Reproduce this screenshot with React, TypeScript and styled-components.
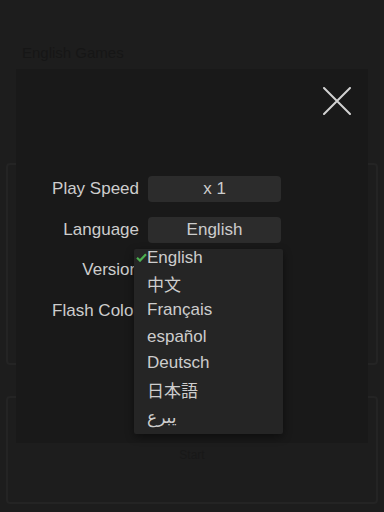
import React from 'react';
import styled, { createGlobalStyle } from 'styled-components';

const GlobalStyle = createGlobalStyle`
  html, body {
    margin: 0;
    padding: 0;
    background: #1d1d1d;
    font-family: "Liberation Sans", Arial, "Noto Sans CJK SC", sans-serif;
  }
`;

const Page = styled.div`
  width: 384px;
  height: 512px;
  overflow: hidden;
  position: relative;
  background: #1d1d1d;
  padding: 44px 6px 0;
  box-sizing: border-box;
`;

const PageTitle = styled.div`
  margin-left: 16px;
  font-size: 15px;
  color: #161616;
  height: 119px;
`;

const BgCard = styled.div<{ $h: number }>`
  height: ${(p) => p.$h}px;
  border: 2px solid #242424;
  border-radius: 4px;
  margin-bottom: 31px;
  box-sizing: border-box;
  display: flex;
  justify-content: center;
  padding-top: 50px;
  color: #181818;
  font-size: 12px;
`;

const Modal = styled.div`
  position: absolute;
  left: 16px;
  top: 69px;
  width: 352px;
  height: 374px;
  background: #191919;
  box-sizing: border-box;
  padding: 18px 17px 0 24px;
`;

const Header = styled.div`
  display: flex;
  justify-content: flex-end;
  height: 89px;
`;

const CloseButton = styled.button`
  width: 28px;
  height: 28px;
  padding: 0;
  border: none;
  background: none;
  cursor: pointer;
`;

const Form = styled.div`
  position: relative;
  display: grid;
  grid-template-columns: 99px 133px;
  column-gap: 9px;
  row-gap: 14.5px;
  align-items: center;
`;

const Label = styled.div`
  text-align: right;
  font-size: 17px;
  color: #cdcdcd;
  white-space: nowrap;
`;

const ValueButton = styled.div`
  height: 26px;
  border-radius: 4px;
  background: #2c2c2c;
  color: #cdcdcd;
  font-size: 17px;
  display: flex;
  align-items: center;
  justify-content: center;
`;

const Dropdown = styled.div`
  position: absolute;
  left: 94px;
  top: 73px;
  width: 149px;
  height: 185px;
  background: #252525;
  border-radius: 2px;
  box-shadow: 0 3px 8px rgba(0, 0, 0, 0.45);
  overflow: hidden;
`;

const List = styled.ul`
  list-style: none;
  margin: 0;
  padding: 0;
`;

const Item = styled.li<{ $font?: string; $ltr?: boolean }>`
  position: relative;
  height: 26.6px;
  line-height: 26.6px;
  padding-left: 13px;
  font-size: 17px;
  color: #cdcdcd;
  font-family: ${(p) => p.$font || '"Liberation Sans", Arial, sans-serif'};
  ${(p) => (p.$ltr ? 'direction: ltr; unicode-bidi: bidi-override;' : '')}

  &:first-child {
    height: 21.6px;
    line-height: 17px;
  }
`;

const Check = styled.svg`
  position: absolute;
  left: 2px;
  top: 4px;
`;

const languages: { name: string; font?: string; ltr?: boolean }[] = [
  { name: 'English' },
  { name: '中文', font: '"Noto Sans CJK SC", sans-serif' },
  { name: 'Français' },
  { name: 'español' },
  { name: 'Deutsch' },
  { name: '日本語', font: '"Noto Sans CJK JP", sans-serif' },
  { name: 'عربي', font: '"DejaVu Sans", sans-serif', ltr: true },
];

const App: React.FC = () => {
  return (
    <>
      <GlobalStyle />
      <Page>
        <PageTitle>English Games</PageTitle>
        <BgCard $h={202} />
        <BgCard $h={108}>Start</BgCard>

        <Modal>
          <Header>
            <CloseButton aria-label="close">
              <svg width="28" height="28" viewBox="0 0 28 28">
                <path d="M1 1 L27 27 M27 1 L1 27" stroke="#d2d2d2" strokeWidth="2" strokeLinecap="round" />
              </svg>
            </CloseButton>
          </Header>
          <Form>
            <Label>Play Speed</Label>
            <ValueButton>x 1</ValueButton>
            <Label>Language</Label>
            <ValueButton>English</ValueButton>
            <Label>Version</Label>
            <ValueButton />
            <Label>Flash Color</Label>
            <ValueButton />

            <Dropdown>
              <List>
                {languages.map((l, i) => (
                  <Item key={l.name} $font={l.font} $ltr={l.ltr}>
                    {i === 0 && (
                      <Check width="11" height="9" viewBox="0 0 11 9">
                        <path d="M1 4.8 L4 7.6 L10 1.2" stroke="#4cb050" strokeWidth="2.2" fill="none" />
                      </Check>
                    )}
                    {l.name}
                  </Item>
                ))}
              </List>
            </Dropdown>
          </Form>
        </Modal>
      </Page>
    </>
  );
};

export default App;
